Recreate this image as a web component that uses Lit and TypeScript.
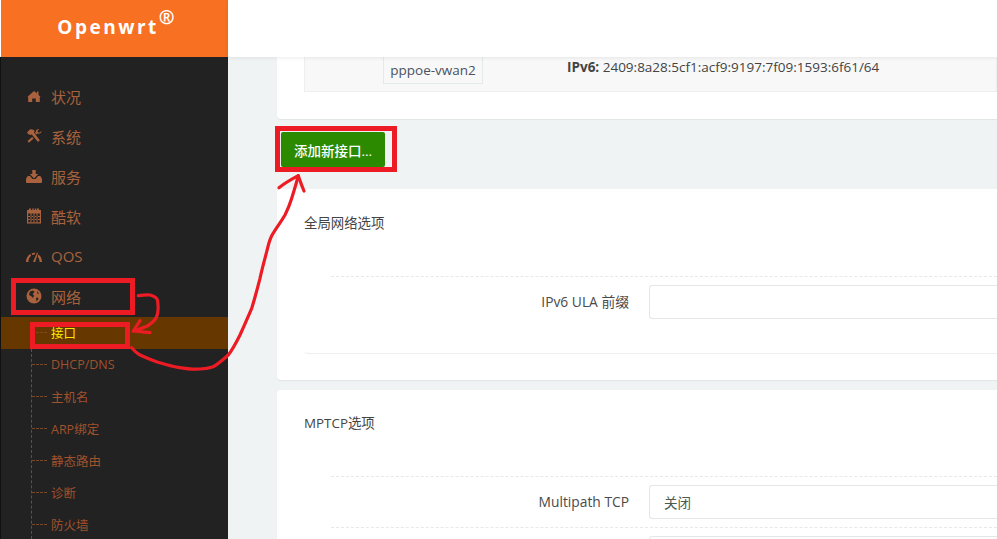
import { LitElement, html, css, svg } from "lit";
import { customElement } from "lit/decorators.js";

const ICONS: Record<string, unknown> = {
  home: svg`<path d="M8 3 10.800 5.400V3.500H12.500V6.900L14.500 8.700 13.800 9.500V14H9.800V10.500H6.200V14H2.200V9.500L1.500 8.700z"/>`,
  tools: svg`<path d="M1 4.500 3.800 1.500C6 1 7.800 1.700 8.800 3.200L7.800 4.300 13.800 12.300 12 14 5.600 6.300 4.500 7.300 3.500 6.200 2.800 6.700z"/><path d="M15.300 3 13.400 4.800 11.900 4.300 11.500 2.800 13.300 1C11.300 .7 9.700 2 9.800 3.900L8.900 4.900 10.200 6.600 11.200 5.600C13.400 6.300 15.700 5.100 15.300 3zM6.200 9.100 1.500 13.100 3 14.700 7.600 10.600z"/>`,
  inbox: svg`<path d="M6.300 2h3.400v4h2.500L8 10.400 3.800 6h2.500z"/><path d="M0 10.700 1.700 8H4L6.500 10.900H9.500L12 8H14.300L16 10.700V14a1 1 0 0 1-1 1H1a1 1 0 0 1-1-1z"/>`,
  cal: svg`<path fill-rule="evenodd" d="M3 .5h2v1.500h1.300V.5h1.500V2h1V.5h1.500V2H11V.5h2V2h2v13.500H1V2h2zM2.200 5.500v8.800h11.600V5.500zM4.500 5.500h1v9h-1zM7.500 5.500h1v9h-1zM10.500 5.500h1v9h-1zM2.200 8h11.600v1H2.200zM2.200 11h11.600v1H2.200z"/>`,
  gauge: svg`<path d="M0 14C0 10.500 1.600 7.600 4.200 6L5.200 7.700C3.400 9 2.400 11.200 2.400 14z"/><path d="M5.500 5.300C6.700 4.800 8 4.600 9.500 4.700L8.300 6.700C7.600 6.700 7 6.800 6.400 7z"/><path d="M7 14 11 4.600 12 5 9.200 14z"/><path d="M12.300 6.500C14.600 8 16 10.700 16 14H13.600C13.600 12 13 10.300 11.700 9z"/>`,
  globe: svg`<circle cx="8" cy="8" r="7.500"/><path fill="#222" d="M4 3.500 7 2.500 8.500 4 6.500 6 8 7.500 7 10 5 8 3 7zM10 10l2-.5L12.500 11 10.500 13.500zM11 3l2 2.500-1.500.5z"/>`,
};

const MENU = [
  ["home", "状况"],
  ["tools", "系统"],
  ["inbox", "服务"],
  ["cal", "酷软"],
  ["gauge", "QOS"],
  ["globe", "网络"],
];
const SUBS = ["接口", "DHCP/DNS", "主机名", "ARP绑定", "静态路由", "诊断", "防火墙"];

@customElement("app-root")
export class AppRoot extends LitElement {
  static styles = css`
    :host {
      display: block;
      position: relative;
      width: 997px;
      height: 539px;
      overflow: hidden;
      background: #eff3f4;
      font-family: "Open Sans", "Noto Sans CJK SC", sans-serif;
      font-size: 13.5px;
      color: #444;
    }
    .page { display: flex; height: 539px; }
    .side { width: 228px; flex: none; background: #fff; display: flex; flex-direction: column; }
    .logo {
      height: 57px; flex: none; margin-left: 1px; background: #f87022; color: #fff;
      font-size: 19px; letter-spacing: 2.5px;
      display: flex; align-items: center; justify-content: center;
      padding-left: 3px; padding-bottom: 3px; box-sizing: border-box;
    }
    .logo b { font-weight: 700; }
    .logo sup { font-size: 19px; font-weight: 700; letter-spacing: 0; line-height: 1; align-self: flex-start; margin-top: 8px; margin-left: 0; }
    .nav { flex: 1; background: #222; border-left: 1px solid #111; padding-top: 20px; overflow: hidden; }
    .item { height: 40px; display: flex; align-items: center; color: #a9623d; font-size: 15px; padding-bottom: 2px; box-sizing: border-box; }
    .item svg { width: 16px; height: 16px; fill: #a9623d; margin-left: 25px; margin-right: 9px; flex: none; }
    .subs { position: relative; height: 232px; }
    .subs::before { content: ""; position: absolute; left: 30px; top: 32px; bottom: 0; border-left: 1px dashed #7b4a24; }
    .sub { height: 32px; position: relative; display: flex; align-items: center; padding: 0 0 2px 50px; box-sizing: border-box; color: #a0522d; font-size: 12.5px; }
    .sub::before { content: ""; position: absolute; left: 31px; width: 15px; top: 15px; border-top: 1px dashed #7b4a24; }
    .sub.on { background: #663800; color: #ffe800; }
    .main { flex: 1; min-width: 0; display: flex; flex-direction: column; }
    .top { height: 57px; flex: none; background: #fff; box-shadow: 0 1px 4px rgba(0,0,0,.08); position: relative; z-index: 1; }
    .content { flex: 1; padding-left: 49px; min-width: 0; overflow: hidden; }
    .card { background: #fff; border-radius: 4px 0 0 4px; box-shadow: 0 1px 1px rgba(0,0,0,.06); }
    .c1 { height: 62px; padding-left: 27px; box-sizing: border-box; border-radius: 0 0 0 4px; }
    .tbl { height: 35px; background: #f8f8f8; border: 1px solid #eee; border-top: 0; display: flex; box-sizing: border-box; padding-left: 78px; }
    .iface { width: 100px; height: 27px; box-sizing: border-box; border: 1px solid #e4e9e9; border-top: 0; display: flex; align-items: center; justify-content: center; color: #4a5260; }
    .addr { margin-left: 84px; line-height: 21px; }
    .addr b { color: #444; }
    .bar { height: 70px; padding-top: 13px; box-sizing: border-box; padding-left: 4px; }
    .btn { width: 104px; height: 35px; background: #2b8a00; color: #fff; border-radius: 2px; display: flex; align-items: center; justify-content: center; font-weight: 500; }
    .c2 { height: 191px; padding: 24px 0 0 27px; box-sizing: border-box; margin-bottom: 10px; }
    .c3 { height: 200px; padding: 23px 0 0 27px; box-sizing: border-box; }
    .title { font-size: 13.4px; line-height: 20px; color: #444; height: 63px; }
    .sec { margin-left: 27px; }
    .row { border-top: 1px dashed #e8e8e8; height: 51px; padding-top: 8px; box-sizing: border-box; display: flex; align-items: flex-start; }
    .sec.box { height: 77px; margin-left: 0; padding-left: 27px; border-bottom: 1px solid #eee; border-radius: 0 0 0 4px; }
    .sec.box .row { height: 76px; }
    .lab { width: 298px; text-align: right; line-height: 34px; font-size: 13.8px; color: #4a4a4a; flex: none; }
    .inp { margin-left: 20px; flex: 1; height: 34px; box-sizing: border-box; border: 1px solid #e6e6e6; border-right: 0; border-radius: 3px 0 0 3px; line-height: 33px; padding-top: 1px; padding-left: 14px; color: #4a5a50; }
    .anno { position: absolute; inset: 0; width: 997px; height: 539px; pointer-events: none; z-index: 5; }
    .anno rect { fill: none; stroke: #ed1c24; stroke-width: 5; }
    .anno path { fill: none; stroke: #ed1c24; stroke-width: 3.200; stroke-linecap: round; stroke-linejoin: round; }
  `;

  render() {
    return html`
      <div class="page">
        <aside class="side">
          <div class="logo"><b>Openwrt</b><sup>®</sup></div>
          <nav class="nav">
            ${MENU.map(
              ([icon, label]) => html`<div class="item">
                <svg viewBox="0 0 16 16">${ICONS[icon]}</svg><span>${label}</span>
              </div>`
            )}
            <div class="subs">
              ${SUBS.map((s, i) => html`<div class="sub ${i === 0 ? "on" : ""}">${s}</div>`)}
            </div>
          </nav>
        </aside>
        <div class="main">
          <div class="top"></div>
          <div class="content">
            <section class="card c1">
              <div class="tbl">
                <div class="iface">pppoe-vwan2</div>
                <div class="addr"><b>IPv6:</b> 2409:8a28:5cf1:acf9:9197:7f09:1593:6f61/64</div>
              </div>
            </section>
            <div class="bar"><div class="btn">添加新接口...</div></div>
            <section class="card c2">
              <div class="title">全局网络选项</div>
              <div class="sec box">
                <div class="row"><div class="lab">IPv6 ULA 前缀</div><div class="inp"></div></div>
              </div>
            </section>
            <section class="card c3">
              <div class="title">MPTCP选项</div>
              <div class="sec">
                <div class="row"><div class="lab">Multipath TCP</div><div class="inp">关闭</div></div>
                <div class="row"><div class="lab"></div><div class="inp"></div></div>
              </div>
            </section>
          </div>
        </div>
      </div>
      <svg class="anno" viewBox="0 0 997 539">
        <rect x="277.500" y="128.500" width="117" height="41"></rect>
        <rect x="13.500" y="280.500" width="119" height="32"></rect>
        <rect x="32.500" y="324.500" width="95" height="22"></rect>
        <path d="M138.300 295.700C143 295 147 294.500 150 295C154 296 157.500 298 157.700 301C158.200 305 158.500 309 157.700 313C157 317 155.500 319.500 153 321.700C150.500 324 148 326 145 327C141 328.500 137 330 133.300 331"></path>
        <path d="M140 320.700 133.300 331 150 332.700"></path>
        <path d="M131.700 347.700C134 350.500 137 353.500 140 355C146 358 152 360 158.300 362.300C164 364 171 366.500 178 367.300C185 368.500 193 369.500 200 369C205 368.800 209 368 213.300 366.700C218 364 223 359.500 228.300 355C233 349 236.500 342 240 335C244 326 248 317 251.700 308.300C255 298 257.500 288 260 278.300C262 269 264.500 260 266.700 251.700C268 246 269.500 240 271.700 235.700C276 228 281 222 285 215C288 209 290 204 291.700 198.300C294 191 296.500 183 298.300 175.700"></path>
        <path d="M279 187.700C285 183 292 179 298.300 175.700C300 181 302 186 304 191"></path>
      </svg>
    `;
  }
}
